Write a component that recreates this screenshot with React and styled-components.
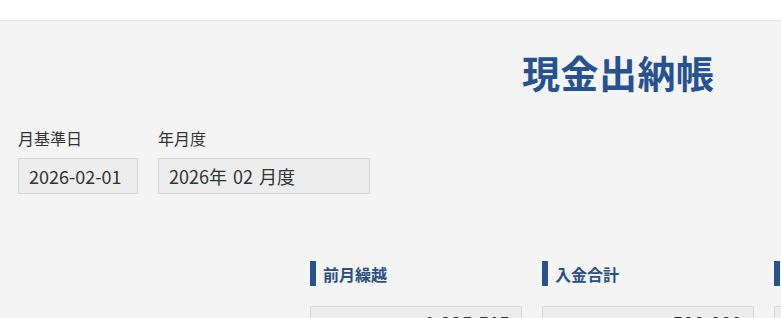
import React from "react";
import styled, { createGlobalStyle } from "styled-components";

const Global = createGlobalStyle`
  html, body { margin: 0; padding: 0; background: #f4f4f4; overflow: hidden; }
  body { font-family: "Noto Sans CJK JP", "Noto Sans", sans-serif; color: #333; }
`;

const TopBar = styled.header`
  height: 20px;
  background: #ffffff;
  border-bottom: 1px solid #dfdfdf;
`;

const Main = styled.main`
  padding: 0 18px;
`;

const TitleRow = styled.div`
  padding: 32px 0 0 504px;
  height: 62px;
  box-sizing: border-box;
`;

const Title = styled.h1`
  margin: 0;
  font-size: 38px;
  line-height: 1;
  font-weight: 700;
  color: #26528f;
  white-space: nowrap;
  letter-spacing: 0.5px;
`;

const FilterRow = styled.div`
  display: flex;
  gap: 20px;
  margin-top: 44px;
`;

const Field = styled.div`
  display: flex;
  flex-direction: column;
  gap: 9px;
`;

const Label = styled.label`
  font-size: 16px;
  line-height: 22px;
  color: #333;
`;

const ReadBox = styled.div`
  width: ${(p) => p.$w}px;
  height: 36px;
  box-sizing: border-box;
  background: #ededed;
  border: 1px solid #d6d6d6;
  padding: 0 10px;
  display: flex;
  align-items: center;
  font-size: 18px;
  word-spacing: 2px;
  color: #333;
  white-space: nowrap;
`;

const Summary = styled.div`
  display: grid;
  grid-template-columns: repeat(3, 212px);
  gap: 20px;
  margin: 67px 0 0 292px;
`;

const Card = styled.div`
  display: flex;
  flex-direction: column;
  gap: 20px;
`;

const CardHead = styled.div`
  display: flex;
  align-items: center;
  gap: 7px;
  height: 25px;
`;

const Bar = styled.span`
  width: 6px;
  height: 25px;
  background: #26528f;
  flex: none;
`;

const CardTitle = styled.h3`
  margin: 0;
  font-size: 16px;
  font-weight: 700;
  color: #2a4f84;
  white-space: nowrap;
`;

const ValueBox = styled.div`
  height: 40px;
  box-sizing: border-box;
  background: #ededed;
  border: 1px solid #d6d6d6;
  padding: 3px 11px 0;
  display: flex;
  align-items: flex-start;
  justify-content: flex-end;
  font-size: 18px;
  line-height: 24px;
  font-weight: 700;
  color: #333;
`;

const cards = [
  { title: "前月繰越", value: "1,235,515" },
  { title: "入金合計", value: "500,000" },
  { title: "出金合計", value: "312,480" },
];

export default function App() {
  return (
    <>
      <Global />
      <TopBar />
      <Main>
        <TitleRow>
          <Title>現金出納帳</Title>
        </TitleRow>
        <FilterRow>
          <Field>
            <Label>月基準日</Label>
            <ReadBox $w={120}>2026-02-01</ReadBox>
          </Field>
          <Field>
            <Label>年月度</Label>
            <ReadBox $w={212}>2026年 02 月度</ReadBox>
          </Field>
        </FilterRow>
        <Summary>
          {cards.map((c) => (
            <Card key={c.title}>
              <CardHead>
                <Bar />
                <CardTitle>{c.title}</CardTitle>
              </CardHead>
              <ValueBox>{c.value}</ValueBox>
            </Card>
          ))}
        </Summary>
      </Main>
    </>
  );
}
